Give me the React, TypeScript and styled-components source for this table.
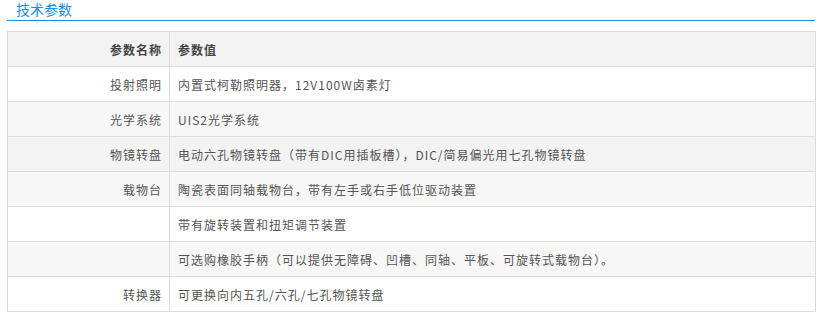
import React from 'react';
import styled, { createGlobalStyle } from 'styled-components';

const GlobalStyle = createGlobalStyle`
  body {
    margin: 0;
    background: #fff;
    font-family: "Noto Sans CJK SC", "Liberation Sans", sans-serif;
  }
`;

const Page = styled.div`
  width: 825px;
  padding: 0 10px 0 7px;
  box-sizing: border-box;
`;

const Title = styled.div`
  height: 20px;
  line-height: 18px;
  padding-left: 9px;
  font-size: 14px;
  color: #1a8fe3;
  border-bottom: 1px solid #1a8fe3;
`;

const Table = styled.table`
  margin-top: 10px;
  width: 809px;
  border-collapse: collapse;
  table-layout: fixed;
  font-size: 12px;
  letter-spacing: 1px;
  color: #555;
`;

const Row = styled.tr<{ $bg: string }>`
  background: ${({ $bg }) => $bg};
`;

const Cell = styled.td<{ $head?: boolean; $label?: boolean }>`
  height: 34px;
  padding: 0 7px 0 8px;
  border: 1px solid #dcdcdc;
  text-align: ${({ $label }) => ($label ? 'right' : 'left')};
  font-weight: ${({ $head }) => ($head ? 700 : 400)};
  color: ${({ $head }) => ($head ? '#444' : '#555')};
  white-space: nowrap;
`;

const rows: [string, string][] = [
  ['投射照明', '内置式柯勒照明器，12V100W卤素灯'],
  ['光学系统', 'UIS2光学系统'],
  ['物镜转盘', '电动六孔物镜转盘（带有DIC用插板槽），DIC/简易偏光用七孔物镜转盘'],
  ['载物台', '陶瓷表面同轴载物台，带有左手或右手低位驱动装置'],
  ['', '带有旋转装置和扭矩调节装置'],
  ['', '可选购橡胶手柄（可以提供无障碍、凹槽、同轴、平板、可旋转式载物台）。'],
  ['转换器', '可更换向内五孔/六孔/七孔物镜转盘'],
];

const rowBg = (i: number) => {
  if (i === 2) return '#f3f3f3';
  return i % 2 === 1 ? '#f7f7f7' : '#fff';
};

export default function App() {
  return (
    <Page>
      <GlobalStyle />
      <Title>技术参数</Title>
      <Table>
        <colgroup>
          <col style={{ width: 162 }} />
          <col />
        </colgroup>
        <tbody>
          <Row $bg="#f3f3f3">
            <Cell as="th" $head $label>参数名称</Cell>
            <Cell as="th" $head>参数值</Cell>
          </Row>
          {rows.map(([name, value], i) => (
            <Row key={i} $bg={rowBg(i)}>
              <Cell $label>{name}</Cell>
              <Cell>{value}</Cell>
            </Row>
          ))}
        </tbody>
      </Table>
    </Page>
  );
}
